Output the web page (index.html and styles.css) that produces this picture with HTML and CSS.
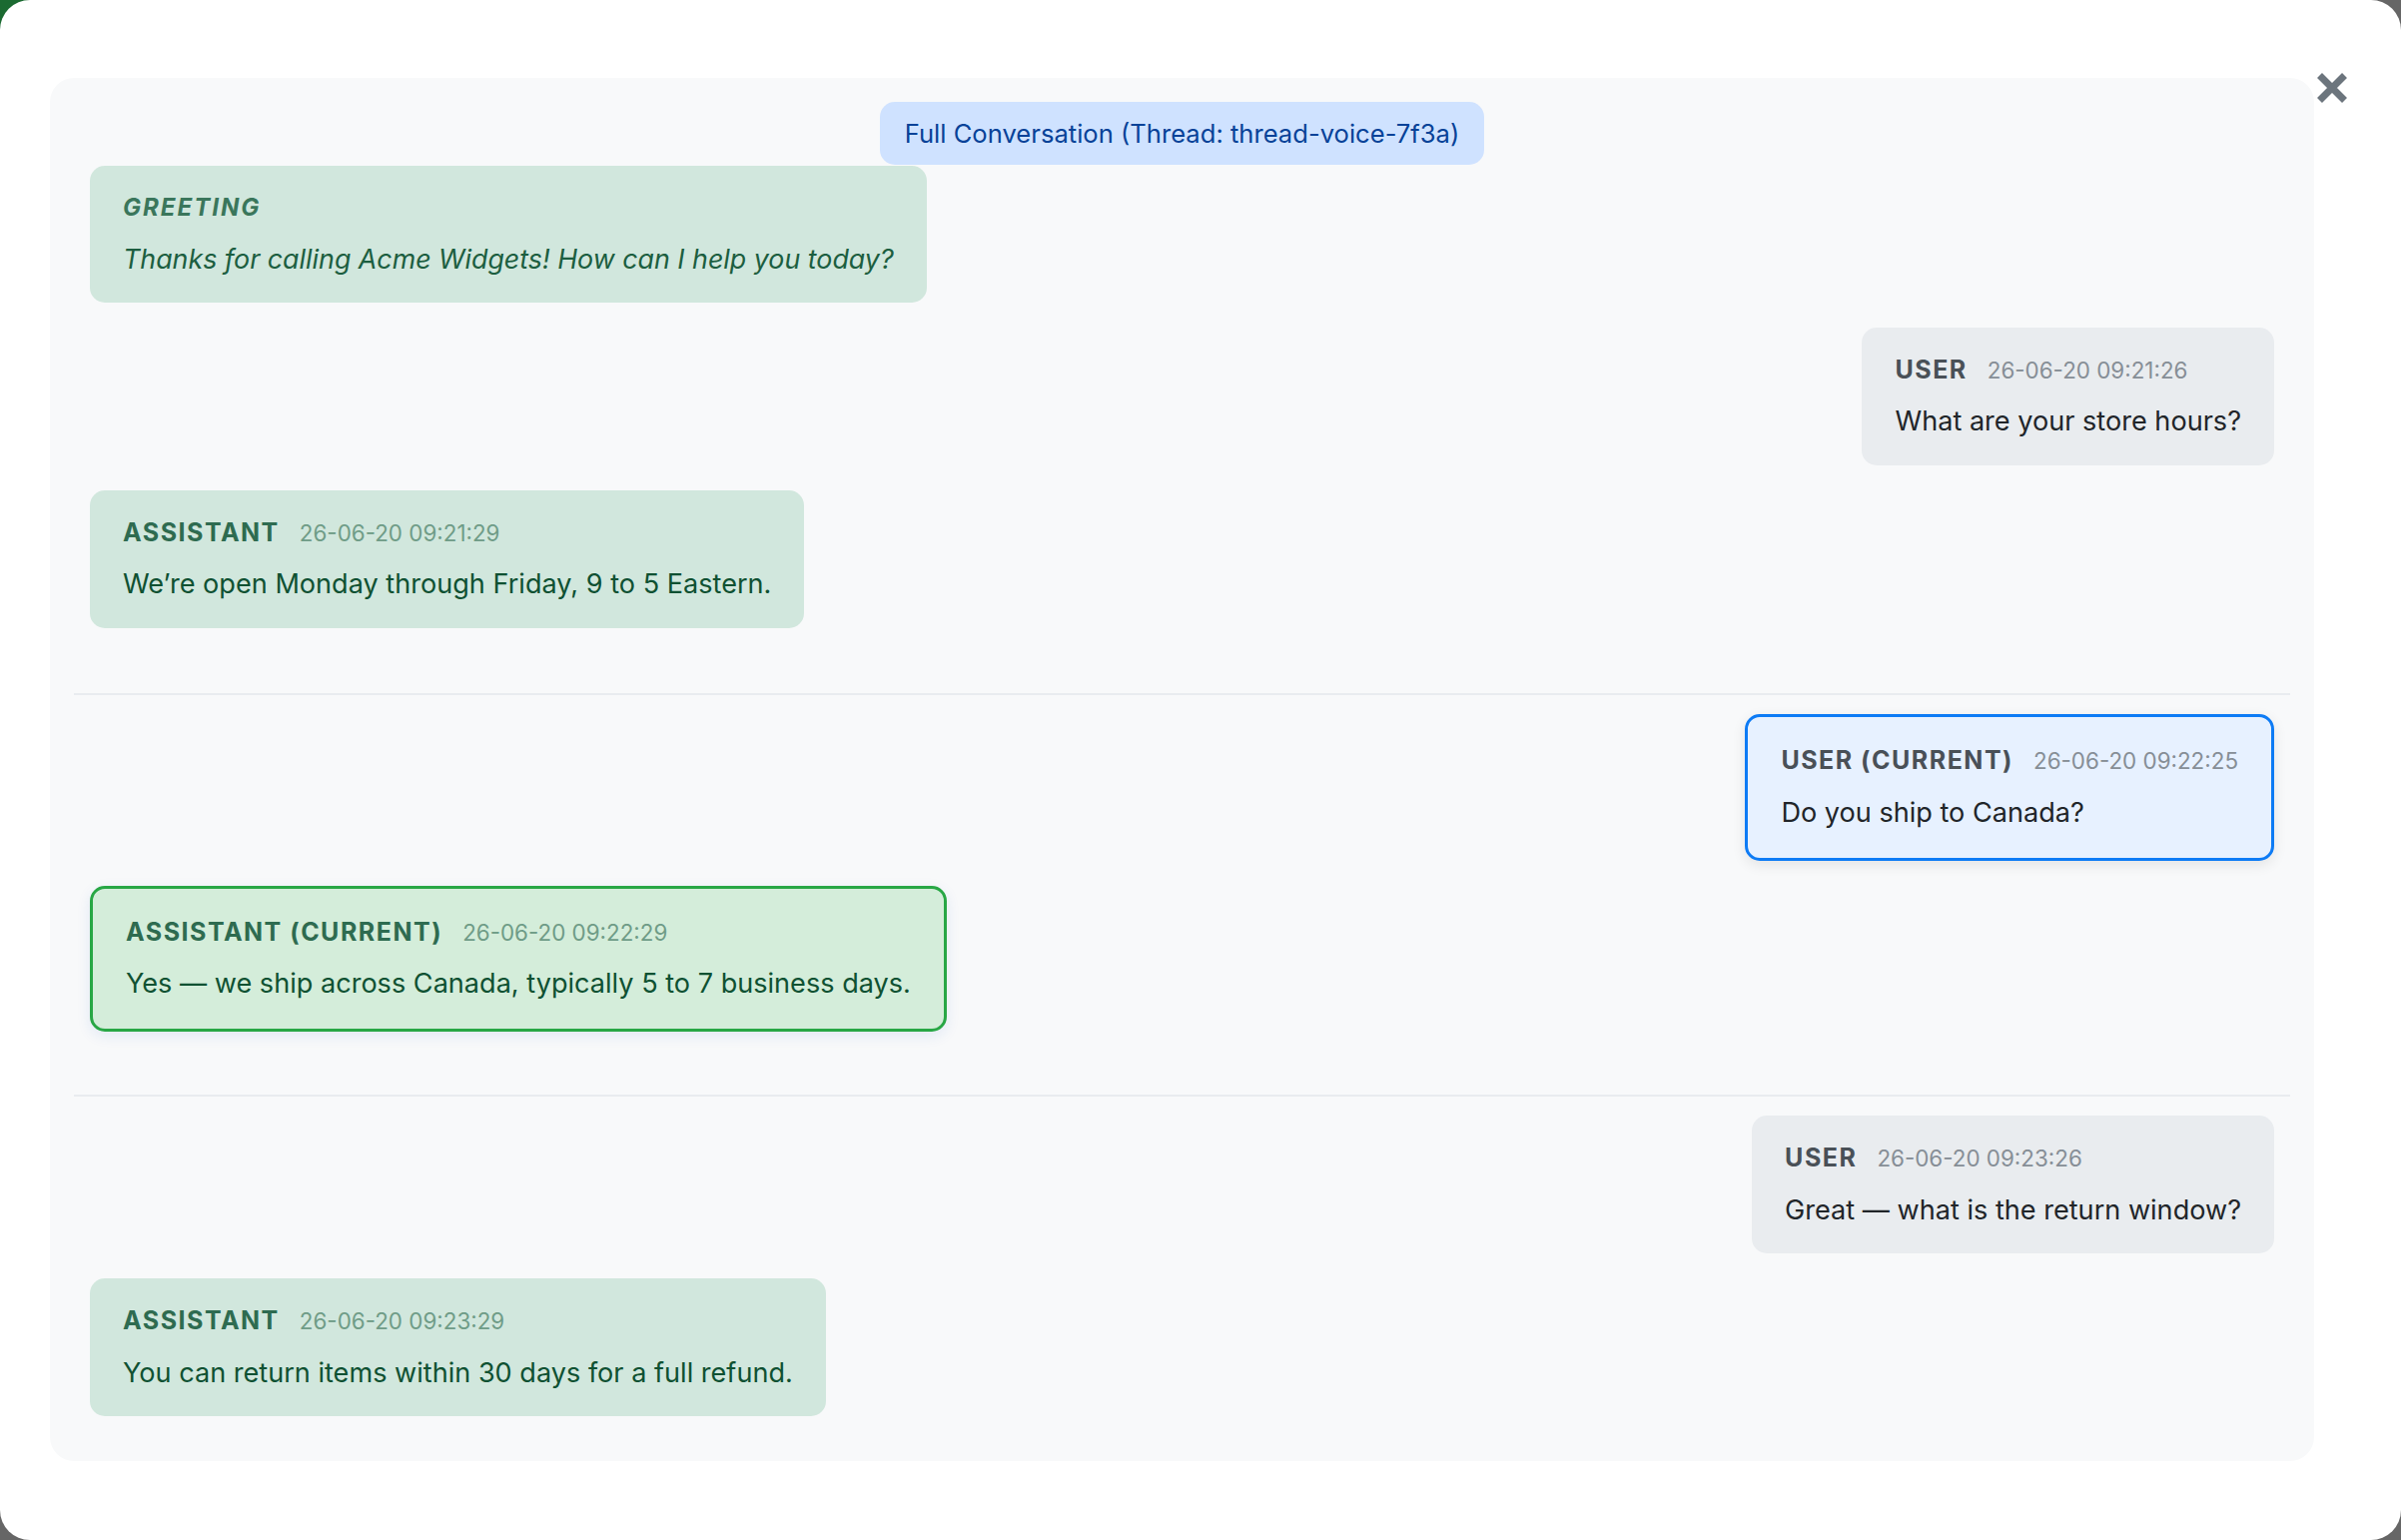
FILE: index.html
```html
<!DOCTYPE html>
<html lang="en">

<head>
    <meta charset="UTF-8">
    <meta name="viewport" content="width=device-width, initial-scale=1.0">
    <title>Full Conversation</title>
    <link rel="stylesheet" href="styles.css">
</head>

<body>
    <div class="modal">
        <button class="close" type="button" aria-label="Close">
            <svg width="30" height="30" viewBox="0 0 30 30">
                <path d="M2.5 2.5 L27.5 27.5 M27.5 2.5 L2.5 27.5" stroke="#6c757d" stroke-width="7" fill="none" />
            </svg>
        </button>

        <div class="thread">
            <div class="thread-title">Full Conversation (Thread: thread-voice-7f3a)</div>

            <!-- turn 1 -->
            <div class="turn">
                <div class="msg assistant greeting">
                    <div class="msg-head">
                        <span class="role">Greeting</span>
                    </div>
                    <div class="msg-text">Thanks for calling Acme Widgets! How can I help you today?</div>
                </div>
                <div class="msg user">
                    <div class="msg-head">
                        <span class="role">User</span>
                        <span class="time">26-06-20 09:21:26</span>
                    </div>
                    <div class="msg-text">What are your store hours?</div>
                </div>
                <div class="msg assistant">
                    <div class="msg-head">
                        <span class="role">Assistant</span>
                        <span class="time">26-06-20 09:21:29</span>
                    </div>
                    <div class="msg-text">We’re open Monday through Friday, 9 to 5 Eastern.</div>
                </div>
            </div>

            <!-- turn 2 (current) -->
            <div class="turn">
                <div class="msg user current">
                    <div class="msg-head">
                        <span class="role">User (current)</span>
                        <span class="time">26-06-20 09:22:25</span>
                    </div>
                    <div class="msg-text">Do you ship to Canada?</div>
                </div>
                <div class="msg assistant current">
                    <div class="msg-head">
                        <span class="role">Assistant (current)</span>
                        <span class="time">26-06-20 09:22:29</span>
                    </div>
                    <div class="msg-text">Yes — we ship across Canada, typically 5 to 7 business days.</div>
                </div>
            </div>

            <!-- turn 3 -->
            <div class="turn">
                <div class="msg user">
                    <div class="msg-head">
                        <span class="role">User</span>
                        <span class="time">26-06-20 09:23:26</span>
                    </div>
                    <div class="msg-text">Great — what is the return window?</div>
                </div>
                <div class="msg assistant">
                    <div class="msg-head">
                        <span class="role">Assistant</span>
                        <span class="time">26-06-20 09:23:29</span>
                    </div>
                    <div class="msg-text">You can return items within 30 days for a full refund.</div>
                </div>
            </div>
        </div>
    </div>
</body>

</html>
```

FILE: styles.css
```css
* {
    margin: 0;
    padding: 0;
    box-sizing: border-box;
}

html,
body {
    height: 100%;
}

body {
    position: relative;
    overflow: hidden;
    background-color: #666666;
    font-family: Inter, "Noto Sans", sans-serif;
}

/* bit of the green app header peeking behind the modal */
body::before {
    content: "";
    position: absolute;
    top: 0;
    left: 0;
    width: 60px;
    height: 60px;
    background-color: #1b6a31;
}

.modal {
    position: relative;
    height: 100vh;
    padding: 78px 87px 79px 50px;
    background-color: #fff;
    border-radius: 30px;
}

.close {
    position: absolute;
    top: 73px;
    right: 54px;
    width: 30px;
    height: 30px;
    border: none;
    background: none;
    cursor: pointer;
}

.close svg {
    display: block;
}

.thread {
    height: 100%;
    display: flex;
    flex-direction: column;
    padding: 24px 24px 0;
    background-color: #f8f9fa;
    border-radius: 24px;
    overflow: hidden;
}

.thread-title {
    align-self: center;
    margin-bottom: 1px;
    padding: 12.5px 25px;
    background-color: #cfe2ff;
    color: #084298;
    font-size: 25.6px;
    line-height: 1.5;
    border-radius: 15px;
}

.turn {
    display: flex;
    flex-direction: column;
    gap: 25px;
    padding: 0 16px;
}

.turn + .turn {
    margin-top: 65px;
    padding-top: 19.5px;
    border-top: 2px solid #e9ecef;
}

.turn + .turn + .turn {
    margin-top: 63px;
}

.msg {
    max-width: 70%;
    padding: 24px 33px 23px;
    border-radius: 15px;
    font-size: 27.1px;
    line-height: 1.5;
}

.msg-head {
    display: flex;
    align-items: baseline;
    gap: 20px;
    margin-bottom: 13px;
    line-height: 1.5;
}

.role {
    font-size: 25px;
    font-weight: 700;
    letter-spacing: 1.5px;
    text-transform: uppercase;
}

.time {
    font-size: 22.4px;
}

.user {
    align-self: flex-end;
    background-color: #e9ecef;
    color: #212529;
}

.user .role {
    color: #495057;
}

.user .time {
    color: #868e96;
}

.assistant {
    align-self: flex-start;
    background-color: #d1e7dd;
    color: #0f5132;
}

.assistant .role {
    color: #2e6b50;
}

.assistant .time {
    color: #6f9c87;
}

.greeting .role {
    font-size: 24px;
    font-style: italic;
    letter-spacing: 2px;
    color: #3a765b;
}

.greeting .msg-text {
    font-size: 26.8px;
    font-style: italic;
    color: #1c5e40;
}

.current {
    padding-top: 25px;
    padding-bottom: 24px;
    border: 3px solid;
    box-shadow: 0 4px 14px rgba(0, 0, 0, 0.09);
}

.user.current {
    background-color: #e7f1ff;
    border-color: #0d7bf5;
}

.assistant.current {
    background-color: #d4edda;
    border-color: #28a745;
    box-shadow: 0 4px 14px rgba(30, 90, 200, 0.1);
}
```
